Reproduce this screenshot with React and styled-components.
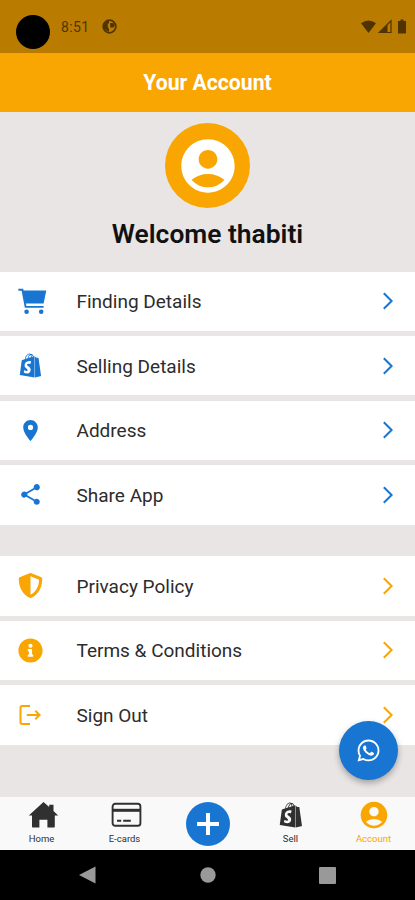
import React from "react";
import styled, { createGlobalStyle } from "styled-components";
import { FaShopify, FaShieldAlt, FaInfoCircle, FaWhatsapp } from "react-icons/fa";
import { MdLocationOn, MdShare, MdAccountCircle } from "react-icons/md";

const ORANGE = "#f9a602";
const BLUE = "#1875d2";

const GlobalStyle = createGlobalStyle`
  * {
    box-sizing: border-box;
  }
  body {
    margin: 0;
    font-family: Roboto, "Liberation Sans", sans-serif;
  }
`;

const Screen = styled.div`
  position: relative;
  width: 415px;
  height: 900px;
  display: flex;
  flex-direction: column;
  overflow: hidden;
  background: #e8e5e4;
`;

// status bar
const StatusBar = styled.div`
  height: 53px;
  flex: none;
  display: flex;
  align-items: flex-start;
  padding: 15px 7px 0 16px;
  background: #b97c00;
  color: #503400;
`;
const Camera = styled.div`
  width: 34px;
  height: 34px;
  border-radius: 50%;
  background: #000;
`;
const Clock = styled.span`
  width: 41px;
  margin-left: 11px;
  padding-top: 4px;
  font-size: 14px;
  line-height: 17px;
  letter-spacing: 0.4px;
`;
const StatusIcons = styled.div`
  display: flex;
  align-items: center;
  margin-left: auto;
  padding-top: 4px;
`;
const StatusGlyph = styled.svg`
  display: block;
  margin-top: 4px;
`;

const Header = styled.header`
  height: 58.5px;
  flex: none;
  display: grid;
  place-items: center;
  padding-top: 1px;
  background: ${ORANGE};
  color: #fff;
  font-size: 21.2px;
  font-weight: 700;
`;

// profile
const Profile = styled.section`
  height: 160px;
  flex: none;
  display: flex;
  flex-direction: column;
  align-items: center;
  padding-top: 11.5px;
`;
const Avatar = styled.div`
  width: 85px;
  height: 85px;
  display: grid;
  place-items: center;
  border-radius: 50%;
  background: ${ORANGE};
  color: #fff;
  font-size: 64px;

  svg {
    display: block;
  }
`;
const Welcome = styled.h1`
  margin: 10px 0 0;
  font-size: 26.4px;
  line-height: 32px;
  font-weight: 600;
  color: #111;
`;

// menu lists
const Menu = styled.div`
  display: flex;
  flex: none;
  flex-direction: column;
  gap: 5.2px;
  margin-bottom: 31.5px;
`;
const Row = styled.div`
  height: 59.4px;
  display: grid;
  grid-template-columns: 60px auto 12px;
  align-items: center;
  padding: 0 21px 0 0;
  background: #fff;
  color: ${(props) => props.$color};
`;
const RowIcon = styled.div`
  display: grid;
  place-items: center;
  font-size: ${(props) => props.$size}px;
  padding-left: ${(props) => props.$shift || 0}px;

  svg {
    display: block;
  }
`;
const RowLabel = styled.span`
  padding-left: 16.5px;
  padding-top: 1px;
  font-size: 19px;
  color: #2c2c2c;
`;

// bottom bars
const TabBar = styled.nav`
  height: 53.5px;
  flex: none;
  display: grid;
  grid-template-columns: repeat(5, 83px);
  margin-top: auto;
  background: #f9f9f9;
`;
const Tab = styled.div`
  display: flex;
  flex-direction: column;
  align-items: center;
  padding-top: 4px;
  color: ${(props) => props.$color || "#303030"};

  span {
    margin-top: 3px;
    font-size: 9.5px;
    line-height: 12px;
  }
`;
const TabIcon = styled.div`
  height: 29px;
  display: flex;
  align-items: center;
  justify-content: center;
  font-size: ${(props) => props.$size}px;
  padding-left: ${(props) => props.$shift || 0}px;
  padding-bottom: ${(props) => props.$lift || 0}px;

  svg {
    display: block;
    flex: none;
  }
`;
const AddButton = styled.div`
  width: 44px;
  height: 44px;
  display: grid;
  place-items: center;
  margin-top: 1px;
  border-radius: 50%;
  background: ${BLUE};
`;
const SystemNav = styled.div`
  height: 50px;
  flex: none;
  display: flex;
  align-items: center;
  justify-content: space-between;
  padding: 0 79px;
  background: #000;
`;
const Fab = styled.div`
  position: absolute;
  right: 17px;
  top: 720.5px;
  width: 59px;
  height: 59px;
  display: grid;
  place-items: center;
  border-radius: 50%;
  background: ${BLUE};
  color: #fff;
  font-size: 25px;
  box-shadow: 0 3px 6px rgba(0, 0, 0, 0.3);
`;

const Chevron = () => (
  <svg width="12" height="18" viewBox="0 0 12 18" fill="none" stroke="currentColor" strokeWidth="2">
    <path d="M1.8 1.2 9.6 9l-7.8 7.8" />
  </svg>
);

const CartIcon = () => (
  <svg width="29" height="27" viewBox="0 0 29 27" fill="currentColor">
    <path d="M4.8 2.4h23.5L25.6 15.4H7.4z" />
    <path d="M.4 1.7h4l3.2 17.2h18" fill="none" stroke="currentColor" strokeWidth="1.9" />
    <circle cx="8.6" cy="23.8" r="2.3" />
    <circle cx="23.2" cy="23.8" r="2.3" />
  </svg>
);

const ExitIcon = () => (
  <svg width="22" height="22" viewBox="0 0 22 22" fill="none" stroke="currentColor" strokeWidth="2">
    <path d="M11 2H3.2Q1.5 2 1.5 3.7v14.6Q1.5 20 3.2 20H11" />
    <path d="M7.8 11h12.4M16.3 6.8l4.3 4.2-4.3 4.2" />
  </svg>
);

const HomeIcon = () => (
  <svg width="31" height="28" viewBox="0 0 31 28" fill="currentColor">
    <path d="M15.5 1 .8 14.6H4V25.4q0 1.2 1.2 1.2h6.2v-7.8h8v7.8h6.2q1.2 0 1.2-1.2V14.6h3.4L25.5 10V3.8h-4.3V6z" />
  </svg>
);

const CardIcon = () => (
  <svg width="31" height="26" viewBox="0 0 31 26" fill="none" stroke="currentColor">
    <rect x="1.6" y="1.8" width="27.8" height="22" rx="2.6" strokeWidth="1.9" />
    <path d="M1.6 8.3h27.8" strokeWidth="3" />
    <path d="M6 18.8h4.2M12.2 18.8h7.6" strokeWidth="2" />
  </svg>
);

const mainItems = [
  { label: "Finding Details", icon: <CartIcon />, size: 29, shift: 4 },
  { label: "Selling Details", icon: <FaShopify />, size: 25 },
  { label: "Address", icon: <MdLocationOn />, size: 25 },
  { label: "Share App", icon: <MdShare />, size: 25 },
];

const moreItems = [
  { label: "Privacy Policy", icon: <FaShieldAlt />, size: 25 },
  { label: "Terms & Conditions", icon: <FaInfoCircle />, size: 25 },
  { label: "Sign Out", icon: <ExitIcon />, size: 22 },
];

function MenuList({ items, color }) {
  return (
    <Menu>
      {items.map((item) => (
        <Row key={item.label} $color={color}>
          <RowIcon $size={item.size} $shift={item.shift}>
            {item.icon}
          </RowIcon>
          <RowLabel>{item.label}</RowLabel>
          <Chevron />
        </Row>
      ))}
    </Menu>
  );
}

export default function App() {
  return (
    <>
      <GlobalStyle />
      <Screen>
        <StatusBar>
          <Camera />
          <Clock>8:51</Clock>
          <StatusGlyph width="15" height="15" viewBox="0 0 15 15">
            <circle cx="7.5" cy="7.5" r="6.3" fill="none" stroke="currentColor" strokeWidth="1.8" />
            <path d="M1.5 4.5 7 1v3.4H5.8V8L7 10v3L2 10zM8.2 4h3l1.5 2-1.2 2.6H8.2z" fill="currentColor" />
          </StatusGlyph>
          <StatusIcons>
            <svg width="15" height="14" viewBox="0 0 15 14">
              <path d="M0 3.2Q7.5-2.2 15 3.2L7.5 13z" fill="currentColor" />
            </svg>
            <svg width="17" height="15" viewBox="0 0 17 15">
              <path d="M3.3 13.5 15 1.8v11.7z" fill="none" stroke="currentColor" strokeWidth="1.2" />
              <path d="M3 14 11.5 5.5V14z" fill="currentColor" />
            </svg>
            <svg width="15" height="15" viewBox="0 0 15 15">
              <path d="M5 2h2.5V.5h3V2H13v12.5H5z" fill="currentColor" />
            </svg>
          </StatusIcons>
        </StatusBar>
        <Header>Your Account</Header>
        <Profile>
          <Avatar>
            <MdAccountCircle />
          </Avatar>
          <Welcome>Welcome thabiti</Welcome>
        </Profile>
        <MenuList items={mainItems} color={BLUE} />
        <MenuList items={moreItems} color={ORANGE} />
        <TabBar>
          <Tab>
            <TabIcon $shift={4}>
              <HomeIcon />
            </TabIcon>
            <span>Home</span>
          </Tab>
          <Tab>
            <TabIcon $shift={4}>
              <CardIcon />
            </TabIcon>
            <span>E-cards</span>
          </Tab>
          <Tab>
            <AddButton>
              <svg width="26" height="26" viewBox="0 0 26 26" stroke="#fff" strokeWidth="4">
                <path d="M13 2v22M2 13h22" />
              </svg>
            </AddButton>
          </Tab>
          <Tab>
            <TabIcon $size={26}>
              <FaShopify />
            </TabIcon>
            <span>Sell</span>
          </Tab>
          <Tab $color={ORANGE}>
            <TabIcon $size={32}>
              <MdAccountCircle />
            </TabIcon>
            <span>Account</span>
          </Tab>
        </TabBar>
        <SystemNav>
          <svg width="17" height="18" viewBox="0 0 17 18" fill="#999">
            <path d="M0 9 16.5.5v17z" />
          </svg>
          <svg width="16" height="16" viewBox="0 0 16 16" fill="#999">
            <circle cx="8" cy="8" r="7.7" />
          </svg>
          <svg width="17" height="17" viewBox="0 0 17 17" fill="#999">
            <rect width="17" height="17" rx="1" />
          </svg>
        </SystemNav>
        <Fab>
          <FaWhatsapp />
        </Fab>
      </Screen>
    </>
  );
}
